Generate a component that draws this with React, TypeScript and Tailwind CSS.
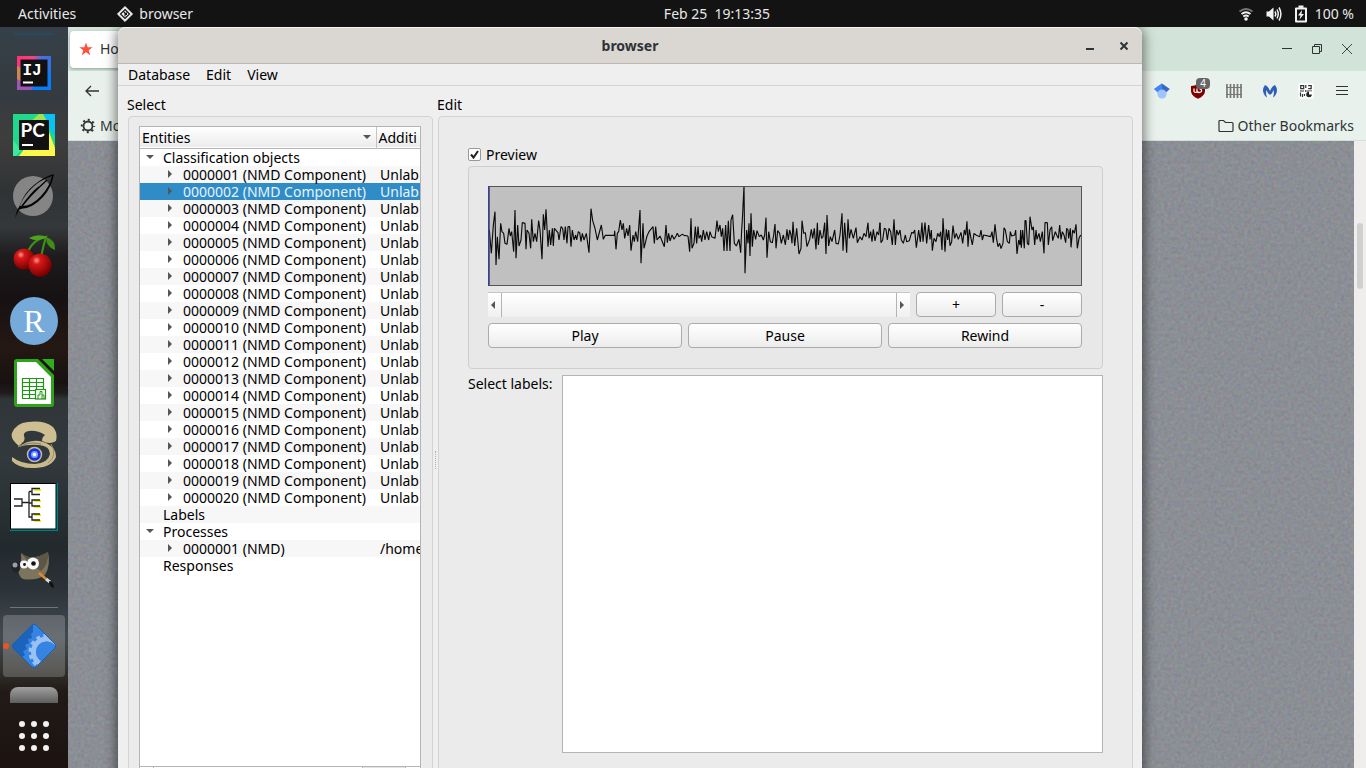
import React from "react";

type Row = {
  name: string;
  level: 0 | 1;
  state?: "open" | "closed";
  extra?: string;
  selected?: boolean;
};

const components: Row[] = Array.from({ length: 20 }, (_, i) => ({
  name: `${String(i + 1).padStart(7, "0")} (NMD Component)`,
  level: 1,
  state: "closed",
  extra: "Unlab",
  selected: i === 1,
}));

const rows: Row[] = [
  { name: "Classification objects", level: 0, state: "open" },
  ...components,
  { name: "Labels", level: 0 },
  { name: "Processes", level: 0, state: "open" },
  { name: "0000001 (NMD)", level: 1, state: "closed", extra: "/home" },
  { name: "Responses", level: 0 },
];

/* Signal samples, three blocks of 210 px in thirds of a pixel. */
const wave = [
  {
    shift: "translate(-24 -18)",
    points:
      "28,150 34,220 40,135 45,95 48,255 52,170 57,238 62,130 66,155 71,160 75,190 81,193 87,145 91,168 95,155 101,215 105,90 108,235 113,135 117,198 123,180 127,128 135,130 138,208 141,150 147,160 152,205 155,118 160,185 165,160 170,185 176,122 180,150 186,238 190,103 194,150 198,88 204,200 208,150 212,195 217,145 220,198 223,145 234,158 237,180 243,140 248,145 252,180 256,140 261,190 264,140 269,140 273,200 277,150 282,180 287,165 290,180 295,155 299,158 303,185 307,160 312,180 319,160 327,218 333,86 338,122 345,145 352,180 364,135 370,178 376,166 403,166 404,152 408,208 412,160 416,155 421,120 426,150 430,130 434,175 440,145 444,168 449,135 453,212 459,165 463,185 467,155 473,185 480,90 483,250 489,130 492,205 497,185 501,168 507,155 519,140 523,190 527,140 531,180 540,168 553,200 558,135 562,188 566,160 570,183 576,165 582,178 588,168 592,160 597,170 606,163 612,166 624,168",
  },
  {
    shift: "translate(576 -18)",
    points:
      "24,168 29,215 33,115 36,205 42,190 46,140 50,190 54,140 57,175 62,165 65,185 70,150 75,180 80,155 86,180 90,155 95,170 105,175 111,122 115,155 120,135 124,170 128,145 132,213 137,135 141,213 145,122 150,213 153,120 158,104 163,190 169,198 177,178 182,218 185,150 187,120 192,18 195,280 200,150 204,190 207,130 210,228 213,100 217,200 221,150 227,178 231,152 238,170 244,165 250,180 254,165 258,113 261,233 266,155 271,185 277,188 281,165 285,132 288,205 293,152 299,160 304,190 310,165 316,195 321,148 325,180 329,150 333,165 336,190 339,125 344,198 350,145 357,222 363,205 366,122 371,160 376,158 381,200 389,178 394,148 398,175 403,145 408,208 412,128 415,195 420,150 425,175 429,170 434,128 438,222 441,105 446,198 451,170 456,185 464,150 468,190 475,192 480,165 486,100 489,212 494,128 500,218 504,118 508,175 513,148 520,175 528,143 532,188 540,170 546,180 552,160 558,170 564,128 567,175 572,155 576,185 580,148 585,183 591,155 596,165 600,128",
  },
  {
    shift: "translate(1176 -18)",
    points:
      "0,128 3,188 8,180 13,145 18,148 22,180 27,145 32,155 37,195 42,118 46,195 50,150 55,165 60,150 64,180 70,190 76,165 80,185 88,182 95,157 100,160 104,150 109,203 116,150 121,186 126,128 129,185 135,128 140,190 146,135 150,178 154,150 157,212 162,175 168,185 173,160 178,170 182,155 186,210 189,115 195,215 199,148 203,180 206,150 210,197 215,185 219,137 224,175 229,160 235,178 243,157 248,190 253,150 257,165 261,124 264,200 268,148 273,175 277,195 282,160 288,165 299,170 303,150 307,180 311,165 332,170 336,155 340,188 345,133 350,178 354,200 359,190 363,206 369,190 372,143 376,150 382,185 388,190 391,155 395,168 404,165 407,150 411,222 416,180 420,195 422,150 424,203 428,150 433,205 435,122 438,122 442,190 446,195 450,110 456,150 460,140 464,195 468,150 471,178 477,160 481,185 487,155 492,220 495,128 502,128 505,195 510,150 515,140 518,182 526,155 530,165 535,175 539,135 543,178 547,155 552,165 557,188 560,145 564,150 566,175 571,145 573,202 578,150 583,160 588,133 592,205 597,175 602,165",
  },
];

function Waveform() {
  return (
    <svg viewBox="0 0 1782 300" preserveAspectRatio="none" className="block h-[100px] w-full bg-[#c0c0c0]" role="img" aria-label="Signal preview">
      {wave.map((w) => (
        <polyline key={w.shift} points={w.points} transform={w.shift} fill="none" stroke="#0a0a0a" strokeWidth="3.4" strokeLinejoin="bevel" />
      ))}
      <rect x="1.5" y="1.5" width="1779" height="297" fill="none" stroke="#555" strokeWidth="3" />
      <path d="M3 0V300" stroke="#3a3a8c" strokeWidth="4.5" />
    </svg>
  );
}

const GearDiamond = ({ className }: { className: string }) => (
  <svg viewBox="0 0 46 46" className={className}>
    <defs>
      <clipPath id="dm">
        <path d="M21 2Q23 0.500 25 2L44 21Q45.500 23 44 25L25 44Q23 45.500 21 44L2 25Q0.500 23 2 21Z" />
      </clipPath>
    </defs>
    <g clipPath="url(#dm)">
      <rect width="46" height="46" fill="#1c63bb" />
      <path d="M22 0V9l-2 2 1 4-4 1 1 4-4 2 2 4-4 2 2 4-3 2 3 5-2 9h34V0Z" fill="#3584e4" />
      <circle cx="35.500" cy="29" r="13" fill="none" stroke="#99c1f1" strokeWidth="5" />
      <circle cx="35.500" cy="29" r="16" fill="none" stroke="#99c1f1" strokeWidth="4" strokeDasharray="3.900 3.281" />
      <circle cx="35.500" cy="29" r="10.500" fill="#3584e4" />
      <path d="M46 22V46H25L30 38Z" fill="#3584e4" />
    </g>
    <path d="M21 2Q23 0.500 25 2L44 21Q45.500 23 44 25L25 44Q23 45.500 21 44L2 25Q0.500 23 2 21Z" fill="none" stroke="#1a5fb4" strokeWidth="1" />
  </svg>
);

function TopBar() {
  return (
    <header className="grid h-[27px] shrink-0 grid-cols-[1fr_auto_1fr] items-center bg-[#131313] text-[14px] leading-5 text-[#e8e8e8]">
      <div className="flex items-center pl-[18px]">
        <button type="button">Activities</button>
        <button type="button" className="ml-[41px] flex items-center gap-1.5">
          <svg viewBox="0 0 16 16" className="size-4">
            <path d="M8 0.400L15.600 8L8 15.600L0.400 8Z" fill="#f2f2f2" stroke="#f2f2f2" strokeWidth="0.800" strokeLinejoin="round" />
            <path d="M8 3.500L12.500 8L8 12.500L3.500 8Z" fill="none" stroke="#131313" strokeWidth="1.200" />
            <path d="M6.500 5.500L9.500 8.500M8 7V10.500M9.500 6.500V9" fill="none" stroke="#131313" strokeWidth="1.100" />
          </svg>
          browser
        </button>
      </div>
      <time className="ml-[68px] whitespace-pre">Feb 25  19:13:35</time>
      <div className="flex items-center justify-end pr-3">
        <svg viewBox="0 0 16 16" className="size-4" fill="none" stroke="#f2f2f2">
          <path d="M1.500 5.500Q8 0.500 14.500 5.500" stroke="#777" strokeWidth="1.800" />
          <path d="M3.500 8Q8 4.500 12.500 8M5.300 10.500Q8 8.500 10.700 10.500" strokeWidth="1.800" />
          <circle cx="8" cy="13" r="1.800" fill="#f2f2f2" stroke="none" />
        </svg>
        <svg viewBox="0 0 16 16" className="ml-3 size-4" fill="none" stroke="#f2f2f2" strokeWidth="1.500">
          <path d="M0.500 5.500H3L7.500 1.500V14.500L3 10.500H0.500Z" fill="#f2f2f2" stroke="none" />
          <path d="M9 5.500Q10.500 8 9 10.500M11 3.500Q13.500 8 11 12.500M13 1.500Q16.800 8 13 14.500" />
        </svg>
        <svg viewBox="0 0 14 18" className="ml-3 h-[18px] w-3.5" fill="none" stroke="#f2f2f2">
          <path d="M2 3.500H12V16.500H2Z" strokeWidth="2" strokeLinejoin="round" />
          <path d="M4.500 1.700H9.500" strokeWidth="2.400" />
          <path d="M8 5L4 10.500H6.500L5.500 14.500L10 9H7.500Z" fill="#f2f2f2" stroke="none" />
        </svg>
        <span className="ml-[7px]">100 %</span>
      </div>
    </header>
  );
}

function Dock() {
  return (
    <nav
      aria-label="Dock"
      className="flex w-[68px] shrink-0 flex-col items-center overflow-hidden bg-[linear-gradient(180deg,#364048_0px,#343b40_70px,#3f3e3e_110px,#303335_165px,#34383b_200px,#1d1b1c_230px,#161113_270px,#241812_320px,#171211_355px,#201c1b_366px,#303538_372px,#323a3e_430px,#222a2e_520px,#2b3339_560px,#434b50_610px,#343431_640px,#211a16_665px,#1c130f_741px)]"
    >
      <div className="mt-1.5 h-0.5 w-10 shrink-0 bg-[#264b60]" />
      <button type="button" aria-label="IntelliJ IDEA" className="mt-[17px] shrink-0">
        <svg viewBox="0 0 42 42" className="size-[42px]">
          <defs>
            <linearGradient id="ij" x1="0" y1="0" x2="1" y2="0.300">
              <stop offset="0" stopColor="#fd3273" />
              <stop offset="0.450" stopColor="#f24383" />
              <stop offset="0.650" stopColor="#596bd8" />
              <stop offset="1" stopColor="#2d72e8" />
            </linearGradient>
          </defs>
          <path d="M4 4H38V38H4Z" fill="url(#ij)" />
          <path d="M4 14L12 18L8 38H4Z" fill="#cf8551" />
          <path d="M4 27L20 36L17 38H4Z" fill="#9c57b5" />
          <path d="M18 38L38 18V38Z" fill="#087cfa" />
          <rect x="7.500" y="7.500" width="27" height="27" fill="#111" />
          <path d="M10 30.500H20" stroke="#fff" strokeWidth="2" />
          <text x="9.500" y="23" fill="#fff" fontFamily="Liberation Mono, monospace" fontWeight="700" fontSize="16">IJ</text>
        </svg>
      </button>
      <button type="button" aria-label="PyCharm" className="mt-5 shrink-0">
        <svg viewBox="0 0 42 42" className="size-[42px]">
          <rect width="42" height="42" fill="#21d789" />
          <path d="M25 0H42V22Z" fill="#07c3f2" />
          <path d="M26 0H30L35 9H16Z" fill="#9be650" />
          <path d="M6 42L12 34L33 10L42 34V42Z" fill="#fcf84a" />
          <path d="M0 26L8 36L3 42H0Z" fill="#3bea9a" />
          <rect x="6" y="6" width="30" height="30" fill="#111" />
          <path d="M9 31H20" stroke="#fff" strokeWidth="2" />
          <text x="7.500" y="23" fill="#fff" fontFamily="Lato, sans-serif" fontWeight="700" fontSize="19">PC</text>
        </svg>
      </button>
      <button type="button" aria-label="Quill" className="mt-4 shrink-0">
        <svg viewBox="0 0 46 46" className="size-[46px]">
          <circle cx="22" cy="24" r="20" fill="#858585" />
          <path d="M4 46Q5 39 9 33Q13 21 23 13Q34 4 43 2Q41 15 32 25Q21 37 9 37Q6 41 4 46ZM9 34Q20 35 30 24Q39 14 41 4Q28 8 18 19Q11 27 9 34Z" fill="#050505" />
          <path d="M9 37Q18 24 36 8M11 34Q21 20 28 15" fill="none" stroke="#050505" strokeWidth="1.400" />
        </svg>
      </button>
      <button type="button" aria-label="CherryTree" className="mt-4 shrink-0">
        <svg viewBox="0 0 44 44" className="size-11">
          <defs>
            <radialGradient id="ch" cx="0.350" cy="0.300" r="0.700">
              <stop offset="0" stopColor="#ff9a90" />
              <stop offset="0.250" stopColor="#d81818" />
              <stop offset="1" stopColor="#7a0000" />
            </radialGradient>
          </defs>
          <path d="M16 17Q22 5 34 3Q31 13 29 23" fill="none" stroke="#3f8f16" strokeWidth="2.200" />
          <path d="M17 4Q26 -1 35 3Q26 9 17 4Z" fill="#4ea31c" />
          <path d="M34 3Q44 6 43 16Q34 13 34 3Z" fill="#3f8f16" />
          <circle cx="12" cy="25" r="10.500" fill="url(#ch)" />
          <circle cx="28" cy="31" r="11.500" fill="url(#ch)" />
        </svg>
      </button>
      <button type="button" aria-label="RStudio" className="mt-[19px] flex size-12 shrink-0 items-center justify-center rounded-full bg-[#75aadb] font-['Liberation_Serif',serif] text-[32px] leading-8 text-white">
        R
      </button>
      <button type="button" aria-label="LibreOffice Calc" className="mt-3.5 shrink-0">
        <svg viewBox="0 0 40 48" className="h-12 w-10">
          <path d="M3 0H24L40 16V45Q40 48 37 48H3Q0 48 0 45V3Q0 0 3 0Z" fill="#2ea41b" />
          <path d="M3 3H22L37 18V45H3Z" fill="#fff" />
          <path d="M28 0H40V12Z" fill="#2fae1c" />
          <path d="M8.500 19.500H29.500V39.500H8.500ZM8.500 23.500H29.500M8.500 27.500H29.500M8.500 31.500H29.500M8.500 35.500H22M15.500 19.500V39.500M22.500 19.500V39.500" fill="none" stroke="#1d9711" strokeWidth="1.200" />
          <rect x="21.500" y="30.500" width="10" height="9.500" fill="#fff" stroke="#1d9711" strokeWidth="1.200" />
          <path d="M24 40V36H26V32.500H28V40M28 36H30V40" fill="none" stroke="#1d9711" strokeWidth="1" />
        </svg>
      </button>
      <button type="button" aria-label="Stellarium" className="mt-3.5 shrink-0">
        <svg viewBox="0 0 46 48" className="h-12 w-[46px]">
          <path d="M1 12Q5 2 17 1Q33 -1 42 6Q47 12 45 20Q39 24 31 20Q31 16 34 14Q26 9 18 10Q12 11 13 15Q14 17 13 20L8 25Q-1 18 1 12Z" fill="#cdbf92" />
          <path d="M7 26Q20 17 32 21Q45 25 45 36Q41 46 25 47Q8 48 1 40V36Q10 43 24 43Q37 42 39 33Q39 25 28 24Q17 23 7 26Z" fill="#c9ba8b" />
          <path d="M7 26Q19 20 30 23" fill="none" stroke="#8e8158" strokeWidth="1.200" />
          <path d="M40 23Q47 34 37 42" fill="none" stroke="#9d9066" strokeWidth="1" />
          <circle cx="23.500" cy="33.500" r="7" fill="#1631e2" stroke="#c9ba8b" strokeWidth="1.500" />
          <circle cx="23.500" cy="33.500" r="3.500" fill="#7aa0ff" />
          <circle cx="23.500" cy="33.500" r="1.800" fill="#fff" />
        </svg>
      </button>
      <button type="button" aria-label="Tree viewer" className="mt-3.5 shrink-0">
        <svg viewBox="0 0 48 48" className="size-12">
          <rect width="48" height="48" fill="#008080" />
          <rect x="0.500" y="0.500" width="45.500" height="45.500" fill="#fff" stroke="#000" />
          <path d="M24 7H31M24 18H31M24 24H31M24 32H31M24 38H31" stroke="#f5f000" strokeWidth="2" />
          <path d="M4 16H12V23H4M12 19.500H19M19 8.500V34H22M19 8.500H22M19 20H22M30 5.500H22V11.500H30M30 17H22V23H30M30 31H22V37H30" fill="none" stroke="#222" strokeWidth="1.300" />
        </svg>
      </button>
      <button type="button" aria-label="GIMP" className="mt-5 shrink-0">
        <svg viewBox="0 0 46 40" className="h-10 w-[46px]">
          <path d="M10 2Q20 11 37 1Q40 14 34 24Q25 30 12 28Q8 26 7 19Q11 12 10 2Z" fill="#7c745c" />
          <path d="M10 2Q20 11 37 1Q38 13 30 20Q19 14 10 2Z" fill="#5c5644" />
          <ellipse cx="5" cy="16" rx="4.500" ry="5.500" fill="#20242a" />
          <ellipse cx="4" cy="14" rx="2.500" ry="2.500" fill="#9aa0a8" />
          <circle cx="13" cy="13.500" r="4" fill="#f4f4f4" />
          <circle cx="22" cy="12.500" r="6" fill="#f8f8f8" />
          <circle cx="13.500" cy="13.500" r="1.400" fill="#111" />
          <circle cx="22.500" cy="12.500" r="2.300" fill="#111" />
          <path d="M28 22L35 28" stroke="#e38a2c" strokeWidth="2.500" />
          <path d="M35 28L39 31" stroke="#ddd" strokeWidth="3" />
          <path d="M38 30Q43 31 43 37Q38 36 38 30Z" fill="#111" />
        </svg>
      </button>
      <div className="mt-4 h-px w-12 shrink-0 bg-[#6f7578]" />
      <button type="button" aria-label="browser" className="mt-[7px] flex h-[62px] w-[62px] shrink-0 items-center justify-center rounded bg-white/20">
        <span className="relative flex">
          <GearDiamond className="size-[46px]" />
          <span className="absolute top-5 -left-2 size-1.5 rounded-full bg-[#e95420]" />
        </span>
      </button>
      <div className="mt-2.5 h-4 w-12 shrink-0 rounded-t-lg bg-[linear-gradient(#a0a0a0,#5e5e5e)]" />
      <button type="button" aria-label="Show applications" className="mt-[18px] grid shrink-0 grid-cols-3 gap-1.5">
        {Array.from({ length: 9 }, (_, i) => (
          <span key={i} className="size-1.5 rounded-full bg-[#f2f2f2]" />
        ))}
      </button>
    </nav>
  );
}

function BackgroundBrowser() {
  return (
    <section aria-label="Web browser" className="flex h-full flex-col text-[14px] leading-5 text-[#2e3436]">
      <div className="flex h-11 shrink-0 items-center justify-between bg-[#d2e3d9] pr-[13px]">
        <div className="ml-0.5 flex h-[37px] w-48 items-center gap-1.5 rounded bg-white pl-2 shadow-[0_1px_3px_#8fa398]">
          <svg viewBox="0 0 16 16" className="size-4">
            <path d="M8 1.500L9.700 6.300H14.700L10.700 9.300L12.200 14.200L8 11.200L3.800 14.200L5.300 9.300L1.300 6.300H6.300Z" fill="#fa523a" />
          </svg>
          Ho
        </div>
        <div className="flex items-center gap-[18px]">
          <button type="button" aria-label="Minimize browser"><svg viewBox="0 0 12 12" className="size-3"><path d="M1 5.500H11" stroke="#2e3436" /></svg></button>
          <button type="button" aria-label="Restore browser"><svg viewBox="0 0 12 12" className="size-3" fill="none" stroke="#2e3436"><path d="M1.500 3.500H8.500V10.500H1.500ZM3.500 3.500V1.500H10.500V8.500H8.500" /></svg></button>
          <button type="button" aria-label="Close browser"><svg viewBox="0 0 12 12" className="size-3"><path d="M1 1L11 11M11 1L1 11" stroke="#2e3436" strokeWidth="0.900" /></svg></button>
        </div>
      </div>
      <div className="flex h-10 shrink-0 items-center justify-between bg-[#e9f1ec] pr-4 pl-4">
        <button type="button" aria-label="Back"><svg viewBox="0 0 16 16" className="size-4" fill="none" stroke="#2e3436" strokeWidth="1.300"><path d="M15 8H2M7 3L2 8L7 13" /></svg></button>
        <div className="flex items-center gap-5">
          <svg viewBox="0 0 16 16" className="size-4">
            <path d="M8 0.500L15.800 6L12 9.500H4L0.200 6Z" fill="#356ac3" />
            <path d="M8 0.500L0.200 6L4 9.500L8 6.500Z" fill="#4285f4" />
            <circle cx="8" cy="11" r="4.600" fill="#a0c3ff" />
          </svg>
          <span className="relative">
            <svg viewBox="0 0 16 16" className="size-4">
              <path d="M8 0.500Q11 3 15 3V8Q15 13 8 15.800Q1 13 1 8V3Q5 3 8 0.500Z" fill="#800000" />
              <path d="M4 5.500V8.500Q5.500 10.500 7 8.500V5.500M7 8.500Q9 10.500 11.500 8.500Q12 6 9.500 6" fill="none" stroke="#fff" strokeWidth="1.200" />
            </svg>
            <span className="absolute -top-[5px] left-1.5 h-[11px] w-3.5 rounded-sm bg-[#666] text-center text-[10px] leading-[11px] text-white">4</span>
          </span>
          <svg viewBox="0 0 16 16" className="size-4" fill="none" stroke="#777"><path d="M1 1V15M4.500 1V15M8 1V15M11.500 1V15M15 1V15" strokeWidth="1.700" /><path d="M0 4.500H16M0 11.500H16" strokeWidth="1.200" /></svg>
          <svg viewBox="0 0 16 16" className="size-4">
            <path d="M3 2Q6 3 8 8Q10 3 13 2Q16 6 14.500 10Q13.500 13 11 14.500Q12.500 11 11.500 7Q10.500 10 8.700 11.500H7.300Q5.500 10 4.500 7Q3.500 11 5 14.500Q2.500 13 1.500 10Q0 6 3 2Z" fill="#2f5fb5" />
          </svg>
          <svg viewBox="0 0 16 16" className="size-4">
            <rect x="0.500" y="0.500" width="15" height="15" rx="1" fill="#fff" />
            <path d="M2.700 2.700H5.700V5.700H2.700ZM10.200 2.700H13.200V5.700H10.200M7.800 2V5M7.800 7V9M2 8H6M9 8H14M2.500 9.500V13.500M4.500 11V14M6.500 11V13" fill="none" stroke="#333" strokeWidth="1.200" />
            <circle cx="11" cy="11.500" r="2.800" fill="#222" />
            <path d="M11 11.500V8.500H14V11.500Z" fill="#fff" />
          </svg>
          <button type="button" aria-label="Menu"><svg viewBox="0 0 16 16" className="size-4"><path d="M2 3.500H14M2 7.500H14M2 11.500H14" stroke="#2e3436" /></svg></button>
        </div>
      </div>
      <div className="flex h-[30px] shrink-0 items-center justify-between border-b border-[#d0e2d7] bg-[#e9f1ec] pr-3 pl-3">
        <span className="flex items-center gap-1">
          <svg viewBox="0 0 16 16" className="size-4" fill="none" stroke="#2e3436">
            <circle cx="8" cy="8" r="4.500" strokeWidth="1.800" />
            <circle cx="8" cy="8" r="6.200" strokeWidth="2" strokeDasharray="2 2.869" strokeDashoffset="1" />
          </svg>
          Mo
        </span>
        <button type="button" className="flex items-center gap-1">
          <svg viewBox="0 0 16 16" className="size-4" fill="none" stroke="#2e3436" strokeWidth="1.200"><path d="M1 3.500Q1 2.500 2 2.500H5.500L7.500 4.500H14Q15 4.500 15 5.500V12.500Q15 13.500 14 13.500H2Q1 13.500 1 12.500Z" /></svg>
          Other Bookmarks
        </button>
      </div>
      <div className="flex min-h-0 grow">
        <svg className="h-full min-w-0 grow bg-[#8b8e95]">
          <filter id="grain" colorInterpolationFilters="sRGB">
            <feTurbulence type="fractalNoise" baseFrequency="0.300" numOctaves="2" seed="4" />
            <feColorMatrix values="0.140 0 0 0 0.475 0 0.140 0 0 0.487 0 0 0.140 0 0.514 0 0 0 0 1" />
          </filter>
          <rect width="100%" height="100%" filter="url(#grain)" />
        </svg>
        <div className="w-3 shrink-0 bg-[#f0eeed] px-[3px] pt-[82px]">
          <div className="h-[66px] rounded-full bg-[#d0d0d0]" />
        </div>
      </div>
    </section>
  );
}

function Arrow({ dir }: { dir: "right" | "down" | "left" }) {
  const d = { right: "M3 1L7 5L3 9Z", down: "M1 3H9L5 7Z", left: "M7 1L3 5L7 9Z" }[dir];
  return (
    <svg viewBox="0 0 10 10" className="size-2.5 shrink-0" fill="#555">
      <path d={d} />
    </svg>
  );
}

function EntityTable() {
  return (
    <div className="flex min-h-0 grow flex-col overflow-hidden border border-[#b4b4b4] bg-white">
      <table className="w-full table-fixed border-collapse">
        <colgroup>
          <col className="w-[236px]" />
          <col />
        </colgroup>
        <thead>
          <tr className="h-[21px] border-b border-[#b4b4b4] bg-[linear-gradient(#ffffff,#ececec)] text-left">
            <th className="border-r border-[#c4c4c4] p-0 font-normal">
              <div className="flex items-center justify-between pr-1 pl-0.5">
                Entities
                <Arrow dir="down" />
              </div>
            </th>
            <th className="p-0 pl-0.5 font-normal">Additi</th>
          </tr>
        </thead>
        <tbody>
          {rows.map((r, i) => (
            <tr
              key={i}
              className={
                r.selected
                  ? "h-[17px] bg-[#308cc6] text-[#e8f3fa]"
                  : "h-[17px] even:bg-[#f7f7f7]"
              }
            >
              <td className="p-0">
                <div className={r.level ? "flex h-[17px] items-center pl-[25px]" : "flex h-[17px] items-center pl-[5px]"}>
                  <span className="w-[18px] shrink-0">
                    {r.state && <Arrow dir={r.state === "open" ? "down" : "right"} />}
                  </span>
                  <span className="whitespace-nowrap">{r.name}</span>
                </div>
              </td>
              <td className="p-0 pl-1 whitespace-nowrap">{r.extra}</td>
            </tr>
          ))}
        </tbody>
      </table>
    </div>
  );
}

const push =
  "h-[25px] rounded-sm border border-[#ababab] bg-[linear-gradient(#ffffff,#ececec)] text-center";

function EditPane() {
  return (
    <section aria-labelledby="edit-title" className="flex min-w-0 grow flex-col">
      <h2 id="edit-title" className="leading-[21px]">Edit</h2>
      <div className="mt-px ml-px flex grow flex-col rounded-sm border border-[#d3d3d3] bg-[#ebebeb] px-[29px] pt-[27px]">
        <label className="mb-px flex h-[21px] items-center gap-[5px]">
          <span className="relative flex size-[13px] rounded-xs border border-[#999] bg-white">
            <input type="checkbox" defaultChecked className="peer size-full appearance-none" />
            <svg viewBox="0 0 11 11" className="pointer-events-none absolute inset-0 hidden size-[11px] peer-checked:block">
              <path d="M2 5.500L4.500 8.500L9 2" fill="none" stroke="#222" strokeWidth="2" />
            </svg>
          </span>
          Preview
        </label>
        <div className="flex flex-col rounded-sm border border-[#cecece] bg-[#e8e8e8] pt-[19px] pr-5 pb-5 pl-[19px]">
          <Waveform />
          <div className="mt-1.5 flex gap-1.5">
            <div className="flex h-[25px] grow border-t border-[#c4c4c4] bg-[linear-gradient(#ffffff,#f0f0f0)]">
              <button type="button" aria-label="Scroll left" className="flex w-3.5 items-center border-r border-[#b4b4b4]"><Arrow dir="left" /></button>
              <div className="grow" />
              <button type="button" aria-label="Scroll right" className="flex w-3.5 items-center border-l border-[#b4b4b4]"><Arrow dir="right" /></button>
            </div>
            <button type="button" className={`${push} w-20`}>+</button>
            <button type="button" className={`${push} w-20`}>-</button>
          </div>
          <div className="mt-1.5 grid grid-cols-3 gap-1.5">
            <button type="button" className={push}>Play</button>
            <button type="button" className={push}>Pause</button>
            <button type="button" className={push}>Rewind</button>
          </div>
        </div>
        <div className="mt-1.5 flex">
          <label htmlFor="labels" className="w-[94px] shrink-0 leading-[18px] whitespace-nowrap">Select labels:</label>
          <select id="labels" multiple className="h-[378px] grow appearance-none border border-[#b4b4b4] bg-white" />
        </div>
      </div>
    </section>
  );
}

function AppWindow() {
  return (
    <main className="absolute top-0 right-[224px] -bottom-10 left-[50px] flex flex-col rounded-t-lg bg-[#efefef] text-[14px] leading-[17px] text-black shadow-[0_2px_12px_2px_rgba(0,0,0,0.5)]">
      <div className="grid h-[37px] shrink-0 grid-cols-[1fr_auto_1fr] items-center rounded-t-lg border-t border-b border-t-[#f4f4f2] border-b-[#bfb8b1] bg-[#dad6d2] text-[#2e3436]">
        <span />
        <h1 className="font-bold">browser</h1>
        <div className="flex justify-end gap-[22px] pr-3">
          <button type="button" aria-label="Minimize"><svg viewBox="0 0 12 12" className="size-3"><path d="M2 9H10" stroke="#2e3436" strokeWidth="2" /></svg></button>
          <button type="button" aria-label="Close"><svg viewBox="0 0 12 12" className="size-3"><path d="M2.500 2.500L9.500 9.500M9.500 2.500L2.500 9.500" stroke="#2e3436" strokeWidth="2" /></svg></button>
        </div>
      </div>
      <nav aria-label="Menu bar" className="flex h-[22px] shrink-0 items-center gap-4 border-b border-[#d3d3d3] px-2.5">
        <button type="button">Database</button>
        <button type="button">Edit</button>
        <button type="button">View</button>
      </nav>
      <div className="flex min-h-0 grow px-[9px] pt-2">
        <section aria-labelledby="select-title" className="flex w-[306px] shrink-0 flex-col">
          <h2 id="select-title" className="leading-[21px]">Select</h2>
          <div className="mt-px ml-px flex min-h-0 grow flex-col rounded-sm border border-[#d3d3d3] bg-[#ebebeb] pt-[9px] pr-[11px] pl-2.5">
            <EntityTable />
            <div className="mb-3.5 flex h-[26px] shrink-0 border-x border-[#b4b4b4] bg-white">
              <div className="w-3.5 border-r border-[#b4b4b4]" />
              <div className="grow" />
              <div className="w-[44px] border-x border-[#b4b4b4] bg-[#e4e4e4]" />
              <div className="w-3.5" />
            </div>
          </div>
        </section>
        <div className="flex w-1 shrink-0 items-center justify-center pt-[18px]">
          <div className="h-[18px] border-l border-dotted border-[#b0b0b0]" />
        </div>
        <EditPane />
      </div>
    </main>
  );
}

export default function App() {
  return (
    <div className="flex h-screen flex-col overflow-hidden bg-black font-['Noto_Sans',sans-serif]">
      <TopBar />
      <div className="flex min-h-0 grow">
        <Dock />
        <div className="relative min-w-0 grow overflow-hidden">
          <BackgroundBrowser />
          <AppWindow />
        </div>
      </div>
    </div>
  );
}
